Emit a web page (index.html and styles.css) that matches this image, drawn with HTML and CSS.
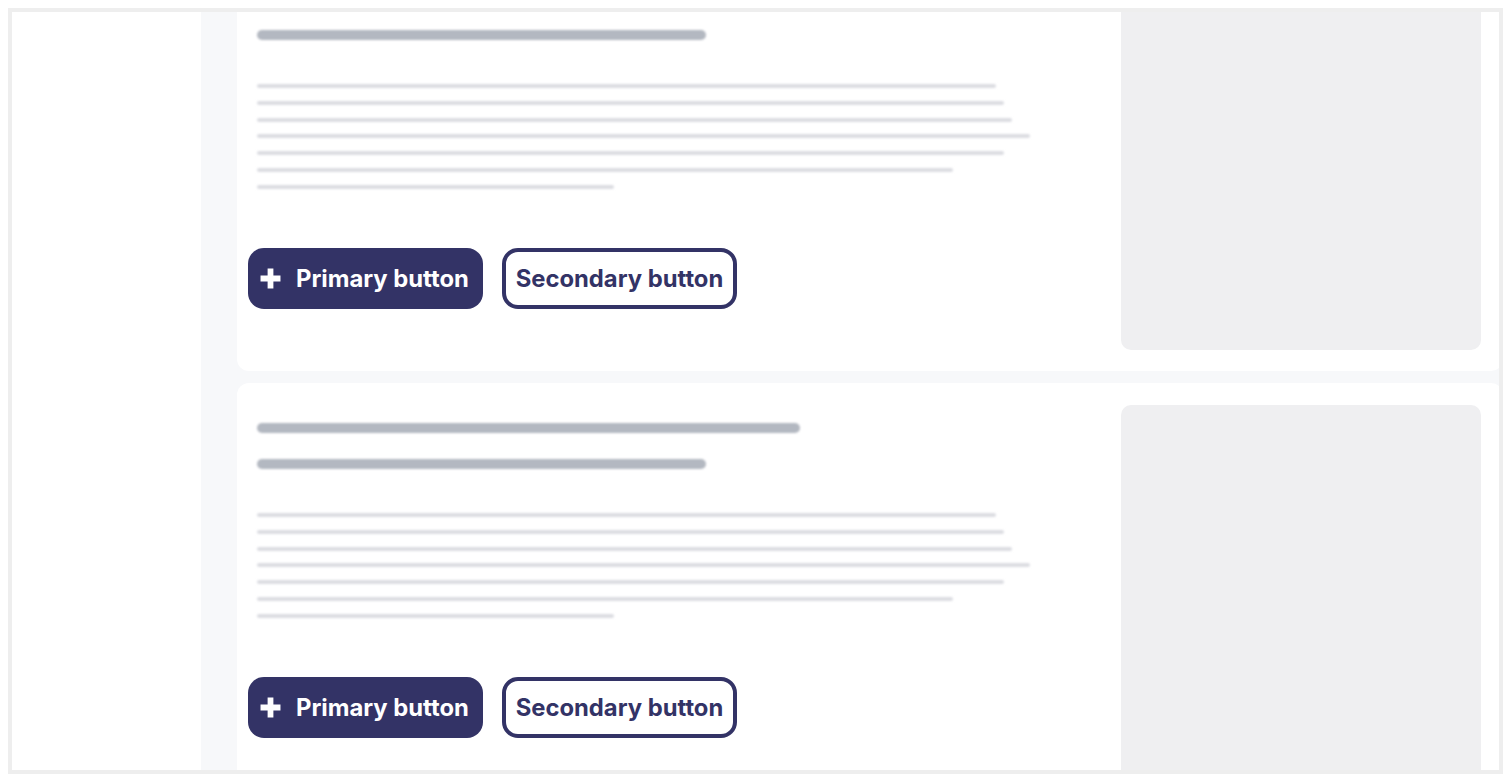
FILE: index.html
```html
<!DOCTYPE html>
<html lang="en">
<head>
<meta charset="utf-8">
<title>Cards</title>
<link rel="stylesheet" href="styles.css">
</head>
<body>
<div class="frame">
  <aside class="sidebar"></aside>
  <main class="main">
    <div class="list">
      <section class="card">
        <div class="content">
          <div class="bar title w543"></div>
          <div class="bar title w449 second"></div>
          <div class="lines">
            <div class="bar line" style="width:739px"></div>
            <div class="bar line" style="width:747px"></div>
            <div class="bar line" style="width:755px"></div>
            <div class="bar line" style="width:773px"></div>
            <div class="bar line" style="width:747px"></div>
            <div class="bar line" style="width:696px"></div>
            <div class="bar line" style="width:357px"></div>
          </div>
          <div class="actions">
            <button class="btn primary"><svg class="plus" viewBox="0 0 20 20" width="21" height="21"><path d="M10 0.5v19M0.5 10h19" stroke="#fff" stroke-width="5.5" fill="none"/></svg><span>Primary button</span></button>
            <button class="btn secondary">Secondary button</button>
          </div>
        </div>
        <div class="panel"></div>
      </section>
      <section class="card">
        <div class="content">
          <div class="bar title w543"></div>
          <div class="bar title w449 second"></div>
          <div class="lines">
            <div class="bar line" style="width:739px"></div>
            <div class="bar line" style="width:747px"></div>
            <div class="bar line" style="width:755px"></div>
            <div class="bar line" style="width:773px"></div>
            <div class="bar line" style="width:747px"></div>
            <div class="bar line" style="width:696px"></div>
            <div class="bar line" style="width:357px"></div>
          </div>
          <div class="actions">
            <button class="btn primary"><svg class="plus" viewBox="0 0 20 20" width="21" height="21"><path d="M10 0.5v19M0.5 10h19" stroke="#fff" stroke-width="5.5" fill="none"/></svg><span>Primary button</span></button>
            <button class="btn secondary">Secondary button</button>
          </div>
        </div>
        <div class="panel"></div>
      </section>
    </div>
  </main>
</div>
</body>
</html>
```

FILE: styles.css
```css
html, body {
  margin: 0;
  padding: 0;
  background: #ffffff;
}
body {
  padding: 8px;
  font-family: Inter, "Noto Sans", sans-serif;
}
.frame {
  box-sizing: border-box;
  width: 1495px;
  height: 766px;
  border: 4px solid #eeeeee;
  display: flex;
  overflow: hidden;
  background: #ffffff;
}
.sidebar {
  width: 189px;
  flex: none;
  background: #ffffff;
}
.main {
  flex: 1;
  background: #f7f8fa;
  padding-left: 36px;
  overflow: hidden;
}
.list {
  margin-top: -58px;
  display: flex;
  flex-direction: column;
  gap: 12px;
}
.card {
  width: 1266px;
  height: 417px;
  box-sizing: border-box;
  background: #ffffff;
  border-radius: 12px;
  display: flex;
  padding: 22px 22px 21px 11px;
}
.content {
  flex: 1;
  padding-top: 18px;
  display: flex;
  flex-direction: column;
}
.panel {
  width: 360px;
  flex: none;
  background: #efeff1;
  border-radius: 10px;
}
.bar {
  margin-left: 9px;
  filter: blur(0.9px);
}
.title {
  height: 10px;
  border-radius: 5px;
  background: #b3b8c1;
}
.w543 { width: 543px; }
.w449 { width: 449px; }
.second { margin-top: 26px; }
.lines {
  margin-top: 44px;
  display: flex;
  flex-direction: column;
  gap: 12.75px;
}
.line {
  height: 4px;
  border-radius: 2px;
  background: #dcdde2;
}
.actions {
  margin-top: 59.3px;
  display: flex;
  gap: 19px;
}
.btn {
  box-sizing: border-box;
  width: 235px;
  height: 61px;
  border-radius: 16px;
  font-family: Inter, "Noto Sans", sans-serif;
  font-weight: 700;
  font-size: 23.8px;
  display: flex;
  align-items: center;
  cursor: pointer;
}
.primary {
  background: #333366;
  color: #ffffff;
  border: none;
  padding: 0 0 0 12px;
  gap: 15px;
}
.plus {
  flex: none;
}
.secondary {
  background: #ffffff;
  color: #333366;
  border: 4px solid #333366;
  justify-content: center;
  padding: 0;
}
```
